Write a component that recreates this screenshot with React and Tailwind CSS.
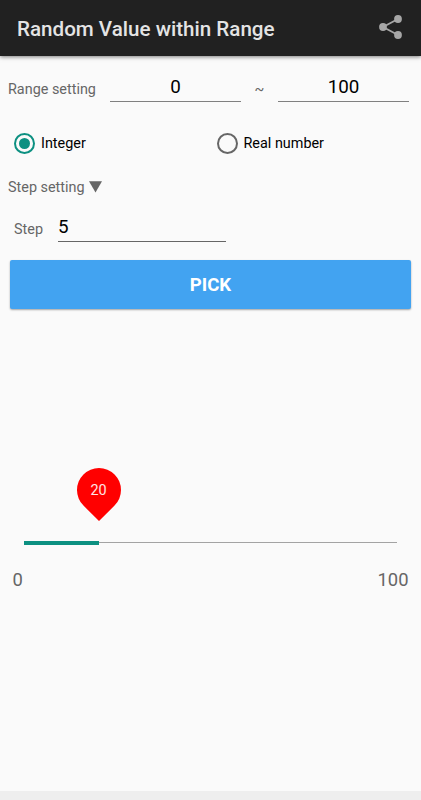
import React, { useState } from 'react';

const ShareIcon = () => (
  <svg width="24" height="24" viewBox="0 0 24 24" fill="#a6a6a6">
    <path d="M4 12 L19 4 M4 12 L19 20" stroke="#a6a6a6" strokeWidth="1.9" />
    <circle cx="4" cy="12" r="3.9" />
    <circle cx="19" cy="4" r="3.9" />
    <circle cx="19" cy="20" r="3.9" />
  </svg>
);

const Radio = ({ label, checked, onClick }) => (
  <button onClick={onClick} className="flex w-[202.5px] items-center gap-[6px]">
    <span
      className={`flex h-[21px] w-[21px] items-center justify-center rounded-full border-2 ${
        checked ? 'border-[#0c9081]' : 'border-[#666666]'
      }`}
    >
      {checked && <span className="h-[11px] w-[11px] rounded-full bg-[#0c9081]" />}
    </span>
    <span className="pt-px text-[14.4px] leading-5 text-black">{label}</span>
  </button>
);

const App = () => {
  const [min, setMin] = useState('0');
  const [max, setMax] = useState('100');
  const [step, setStep] = useState('5');
  const [type, setType] = useState('integer');
  const [value, setValue] = useState(20);

  const low = Number(min);
  const high = Number(max);
  const percent = high > low ? ((value - low) / (high - low)) * 100 : 0;

  const handlePick = () => {
    if (high <= low) return;
    if (type === 'real') {
      setValue(Number((low + Math.random() * (high - low)).toFixed(2)));
      return;
    }
    const size = Number(step) || 1;
    const count = Math.floor((high - low) / size) + 1;
    setValue(low + Math.floor(Math.random() * count) * size);
  };

  return (
    <div className="flex h-[800px] w-full flex-col bg-[#fafafa] font-['Roboto',sans-serif] text-[#666666]">
      {/* App bar */}
      <header className="flex h-14 shrink-0 items-center justify-between bg-[#212121] pl-[17px] pr-[18px] shadow-[0_1px_4px_rgba(0,0,0,0.5)]">
        <h1 className="whitespace-nowrap pt-px text-[20.6px] leading-[30px] font-medium text-[#e4e4e4]">
          Random Value within Range
        </h1>
        <div className="pb-[2px]">
          <ShareIcon />
        </div>
      </header>

      <main className="flex flex-1 flex-col">
        {/* Range */}
        <div className="mt-[18px] flex h-7 items-center pl-2 pr-3">
          <span className="w-[102px] pt-[3px] text-[14.4px]">Range setting</span>
          <input
            value={min}
            onChange={(e) => setMin(e.target.value)}
            className="h-7 w-[131px] border-b border-[#808080] text-center text-[18.8px] text-black outline-none"
          />
          <span className="w-[37px] pt-[3px] text-center text-[14.4px]">~</span>
          <input
            value={max}
            onChange={(e) => setMax(e.target.value)}
            className="h-7 w-[131px] border-b border-[#808080] text-center text-[18.8px] text-black outline-none"
          />
        </div>

        {/* Number type */}
        <div className="mt-[30.5px] flex h-[21px] pl-[14px]">
          <Radio label="Integer" checked={type === 'integer'} onClick={() => setType('integer')} />
          <Radio label="Real number" checked={type === 'real'} onClick={() => setType('real')} />
        </div>

        {/* Step */}
        <div className="mt-[23.5px] flex h-5 items-center gap-1 pl-2 text-[14.4px]">
          <span className="pt-px">Step setting</span>
          <svg width="13" height="12" viewBox="0 0 13 12" fill="#666666">
            <path d="M0 0.3 H13 L6.5 11.5 Z" />
          </svg>
        </div>
        <div className="mt-[17px] flex h-7 items-center pl-[14px]">
          <span className="w-11 pt-[3px] text-[14.4px]">Step</span>
          <input
            value={step}
            onChange={(e) => setStep(e.target.value)}
            className="h-7 w-[168px] border-b border-[#666666] text-[18.8px] text-black outline-none"
          />
        </div>

        <button
          onClick={handlePick}
          className="mx-[10px] mt-[18px] h-[49px] rounded-[2px] bg-[#42a3f1] pt-[2px] text-[18.6px] font-bold text-white shadow-[0_1px_2px_rgba(0,0,0,0.35)]"
        >
          PICK
        </button>

        {/* Result */}
        <div className="mx-6 mt-[231px] flex h-[5px] items-center">
          <div className="relative h-1 bg-[#0c9081]" style={{ width: `${percent}%` }}>
            <div className="absolute -right-[22px] bottom-[33px] flex h-11 w-11 items-center justify-center">
              <div className="absolute inset-0 rotate-45 rounded-full rounded-br-none bg-[#ff0000]" />
              <span className="relative pt-[3px] text-[14.4px] text-white/90">{value}</span>
            </div>
          </div>
          <div className="h-px flex-1 bg-[#a3a3a3]" />
        </div>
        <div className="mt-[21px] flex justify-between px-[12.5px] text-[18.4px] leading-7">
          <span>{min}</span>
          <span>{max}</span>
        </div>
      </main>

      <footer className="h-[9px] shrink-0 bg-[#eeeeee]" />
    </div>
  );
};

export default App;
